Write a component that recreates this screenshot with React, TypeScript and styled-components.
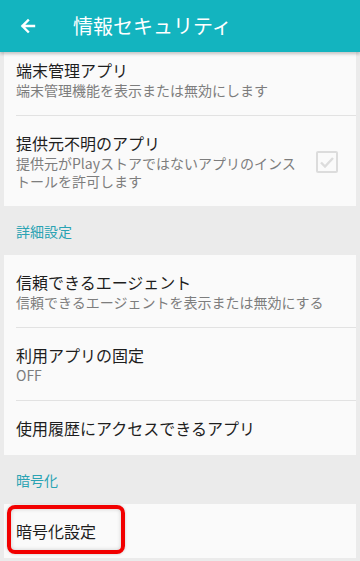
import React from 'react';
import styled, { createGlobalStyle } from 'styled-components';

const GlobalStyle = createGlobalStyle`
  html, body {
    margin: 0;
    padding: 0;
    background: #ebebeb;
  }
  body {
    font-family: "Noto Sans CJK JP", "Noto Sans", Roboto, sans-serif;
  }
`;

const Screen = styled.div`
  width: 360px;
  height: 561px;
  overflow: hidden;
  display: flex;
  flex-direction: column;
  background: #ebebeb;
`;

const Toolbar = styled.header`
  position: relative;
  z-index: 2;
  flex: 0 0 52px;
  height: 52px;
  display: flex;
  align-items: center;
  background-color: #13b4bf;
  color: white;
  box-shadow: 0 2px 3px rgba(0, 0, 0, 0.22);
`;

const BackButton = styled.button`
  width: 56px;
  height: 52px;
  display: flex;
  align-items: center;
  justify-content: center;
  padding: 0;
  margin-right: 17px;
  border: none;
  background: transparent;
`;

const Title = styled.h1`
  margin: 0;
  font-size: 20px;
  font-weight: 400;
  line-height: 1;
`;

const Content = styled.main`
  flex: 1;
  padding: 0 4px;
`;

const Card = styled.section<{ $pull?: number }>`
  background: #fafafa;
  margin-top: ${(p) => (p.$pull ? `-${p.$pull}px` : '0')};
`;

const Item = styled.div`
  position: relative;
  display: flex;
  align-items: center;
  padding: 16px 0 16px 12px;
  & + & {
    border-top: 1px solid transparent;
  }
  & + &::before {
    content: '';
    position: absolute;
    top: -1px;
    left: 12px;
    right: 0;
    height: 1px;
    background: #e2e2e2;
  }
`;

const Texts = styled.div`
  flex: 1;
  min-width: 0;
`;

const ItemTitle = styled.div`
  font-size: 16px;
  line-height: 22px;
  color: #1e1e1e;
`;

const Summary = styled.div<{ $narrow?: boolean }>`
  font-size: 14px;
  line-height: 18px;
  color: #7d7d7d;
  padding-right: ${(p) => (p.$narrow ? '4px' : '0')};
`;

const CheckSlot = styled.div`
  flex: 0 0 56px;
  display: flex;
  justify-content: flex-start;
  padding: 2px 0 0 16px;
  box-sizing: border-box;
`;

const CheckBox = styled.div`
  width: 22px;
  height: 22px;
  box-sizing: border-box;
  border: 2px solid #dcdcdc;
  border-radius: 2px;
  display: flex;
  align-items: center;
  justify-content: center;
`;

const SectionHeader = styled.div`
  height: 49px;
  display: flex;
  align-items: center;
  padding-left: 12px;
  font-size: 14px;
  color: #2aa3b3;
`;

const Highlight = styled.div`
  position: absolute;
  left: 3px;
  top: 1px;
  width: 118px;
  height: 49px;
  box-sizing: border-box;
  border: 4px solid #f20000;
  border-radius: 8px;
  box-shadow: inset 0 0 4px rgba(0, 0, 0, 0.18), 0 0 3px rgba(0, 0, 0, 0.2);
  pointer-events: none;
`;

const App: React.FC = () => (
  <Screen>
    <GlobalStyle />
    <Toolbar>
      <BackButton aria-label="戻る">
        <svg width="18" height="18" viewBox="0 0 24 24">
          <path
            d="M20 12H5M12 4.5L4.5 12L12 19.5"
            fill="none"
            stroke="white"
            strokeWidth="3.2"
            strokeLinecap="square"
          />
        </svg>
      </BackButton>
      <Title>情報セキュリティ</Title>
    </Toolbar>
    <Content>
      <Card $pull={9}>
        <Item>
          <Texts>
            <ItemTitle>端末管理アプリ</ItemTitle>
            <Summary>端末管理機能を表示または無効にします</Summary>
          </Texts>
        </Item>
        <Item>
          <Texts>
            <ItemTitle>提供元不明のアプリ</ItemTitle>
            <Summary $narrow>提供元がPlayストアではないアプリのインストールを許可します</Summary>
          </Texts>
          <CheckSlot>
            <CheckBox>
              <svg width="16" height="16" viewBox="0 0 16 16">
                <path d="M2 8.5L6 12.5L14 4" fill="none" stroke="#dcdcdc" strokeWidth="2.4" />
              </svg>
            </CheckBox>
          </CheckSlot>
        </Item>
      </Card>
      <SectionHeader>詳細設定</SectionHeader>
      <Card>
        <Item>
          <Texts>
            <ItemTitle>信頼できるエージェント</ItemTitle>
            <Summary>信頼できるエージェントを表示または無効にする</Summary>
          </Texts>
        </Item>
        <Item>
          <Texts>
            <ItemTitle>利用アプリの固定</ItemTitle>
            <Summary>OFF</Summary>
          </Texts>
        </Item>
        <Item>
          <Texts>
            <ItemTitle>使用履歴にアクセスできるアプリ</ItemTitle>
          </Texts>
        </Item>
      </Card>
      <SectionHeader>暗号化</SectionHeader>
      <Card>
        <Item>
          <Texts>
            <ItemTitle>暗号化設定</ItemTitle>
          </Texts>
          <Highlight />
        </Item>
      </Card>
    </Content>
  </Screen>
);

export default App;
